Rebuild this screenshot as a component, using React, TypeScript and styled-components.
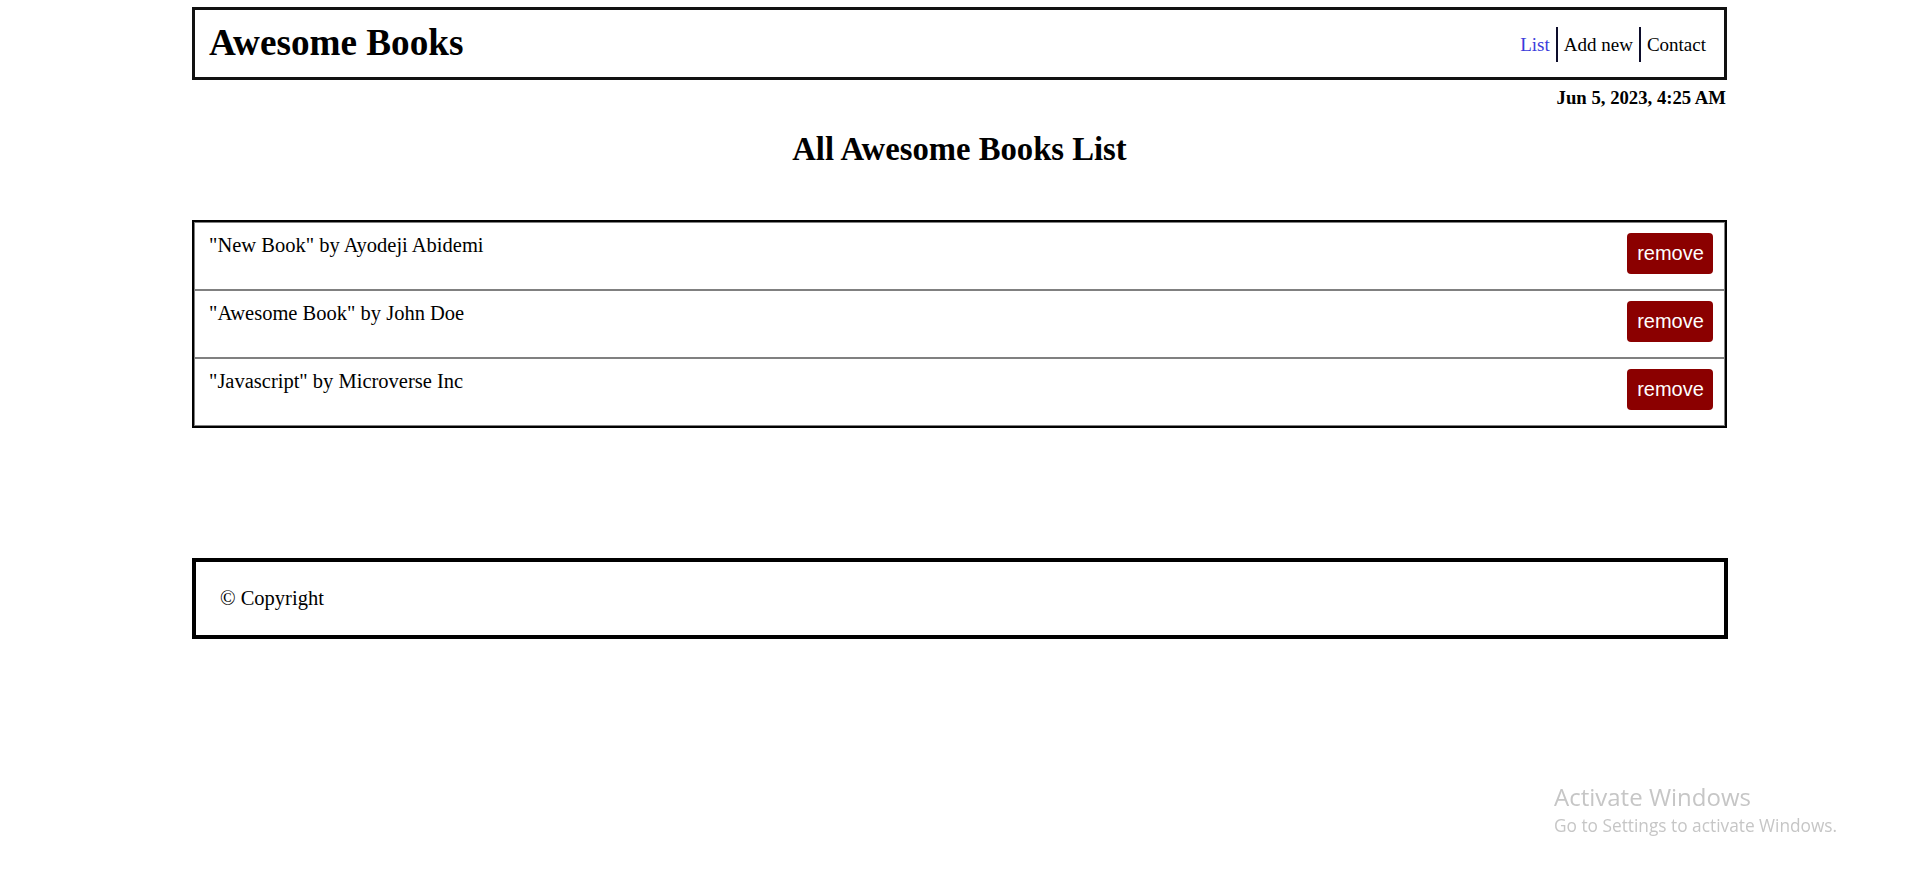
import React from "react";
import styled, { createGlobalStyle } from "styled-components";

const GlobalStyle = createGlobalStyle`
  html, body {
    margin: 0;
    padding: 0;
    background: #ffffff;
  }
  body {
    font-family: "Liberation Serif", "Times New Roman", serif;
    color: #000;
  }
  * { box-sizing: border-box; }
`;

const Page = styled.div`
  padding-left: 3px;
  min-height: 883px;
`;

const Container = styled.div`
  width: 1535px;
  margin: 0 auto;
  display: flex;
  flex-direction: column;
`;

const Header = styled.header`
  margin-top: 7px;
  height: 73px;
  border: 3px solid #111;
  display: flex;
  align-items: center;
  justify-content: space-between;
  padding: 0 12px 0 14px;
`;

const Logo = styled.h1`
  margin: 0;
  font-size: 37.2px;
  font-weight: bold;
  line-height: 1.15;
`;

const Nav = styled.nav`
  display: flex;
  align-items: center;
  margin-top: 1px;
`;

const NavLink = styled.a<{ $active?: boolean; $first?: boolean }>`
  display: block;
  padding: 6px 6px;
  line-height: 23px;
  font-size: 19px;
  color: ${(p) => (p.$active ? "#3b3bdb" : "#000")};
  text-decoration: none;
  border-left: ${(p) => (p.$first ? "none" : "2px solid #0d0d2b")};
`;

const DateLine = styled.div`
  margin-top: 7px;
  text-align: right;
  font-size: 18.72px;
  font-weight: bold;
  line-height: 21.5px;
  padding-right: 1px;
`;

const Title = styled.h2`
  margin: 22px 0 0;
  text-align: center;
  font-size: 32.7px;
  line-height: 37px;
  font-weight: bold;
`;

const BookList = styled.ul`
  list-style: none;
  margin: 52px 0 0;
  padding: 0;
  border: 2px solid #000;
`;

const BookRow = styled.li`
  display: flex;
  justify-content: space-between;
  align-items: flex-start;
  border: 1px solid #808080;
  padding: 10px 11px 15px 14px;
`;

const BookText = styled.span`
  font-size: 20.5px;
  line-height: 23px;
  padding-top: 1px;
`;

const RemoveButton = styled.button`
  background: #8b0000;
  color: #fff;
  border: none;
  border-radius: 4px;
  font-family: "Liberation Sans", Arial, sans-serif;
  font-size: 20px;
  line-height: 23px;
  padding: 9px 9px 9px 10px;
  width: 86px;
  cursor: pointer;
`;

const Footer = styled.footer`
  margin-top: 130px;
  height: 81px;
  width: 1536px;
  border: 4px solid #000;
  display: flex;
  align-items: center;
  padding-left: 24px;
  font-size: 20.5px;
`;

const WinOverlay = styled.div`
  position: fixed;
  left: 1554px;
  top: 782px;
  font-family: "Open Sans", "Noto Sans", sans-serif;
  color: #c6c6c6;
  pointer-events: none;
`;

const WinTitle = styled.div`
  font-size: 24px;
  line-height: 30px;
`;

const WinSub = styled.div`
  margin-top: 3px;
  font-size: 17.3px;
  line-height: 22px;
`;

const books = [
  { title: "New Book", author: "Ayodeji Abidemi" },
  { title: "Awesome Book", author: "John Doe" },
  { title: "Javascript", author: "Microverse Inc" },
];

export default function App() {
  return (
    <Page>
      <GlobalStyle />
      <Container>
        <Header>
          <Logo>Awesome Books</Logo>
          <Nav>
            <NavLink href="#" $active $first>
              List
            </NavLink>
            <NavLink href="#">Add new</NavLink>
            <NavLink href="#">Contact</NavLink>
          </Nav>
        </Header>
        <DateLine>Jun 5, 2023, 4:25 AM</DateLine>
        <Title>All Awesome Books List</Title>
        <BookList>
          {books.map((b) => (
            <BookRow key={b.title}>
              <BookText>
                "{b.title}" by {b.author}
              </BookText>
              <RemoveButton type="button">remove</RemoveButton>
            </BookRow>
          ))}
        </BookList>
        <Footer>© Copyright</Footer>
      </Container>
      <WinOverlay>
        <WinTitle>Activate Windows</WinTitle>
        <WinSub>Go to Settings to activate Windows.</WinSub>
      </WinOverlay>
    </Page>
  );
}
